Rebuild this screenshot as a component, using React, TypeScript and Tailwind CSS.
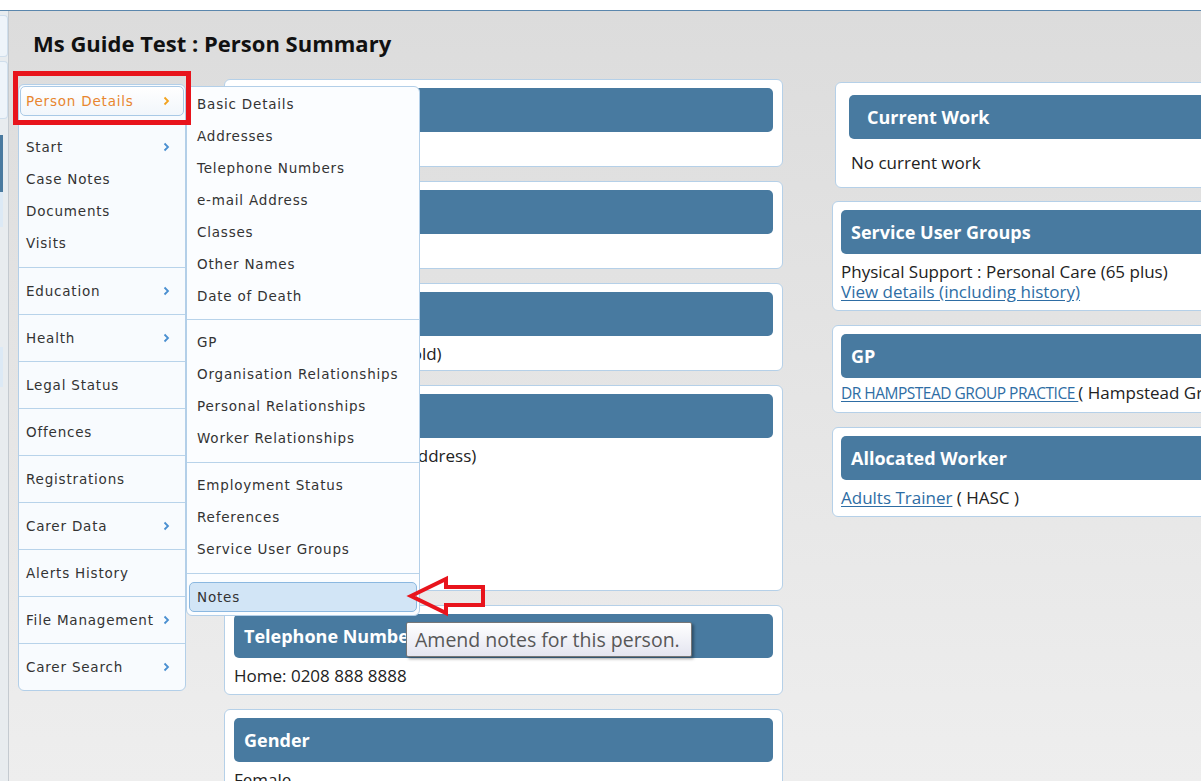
import React from "react";

const menuGroup = ["Start", "Case Notes", "Documents", "Visits"];

const menuItems: { label: string; more?: boolean }[] = [
  { label: "Education", more: true },
  { label: "Health", more: true },
  { label: "Legal Status" },
  { label: "Offences" },
  { label: "Registrations" },
  { label: "Carer Data", more: true },
  { label: "Alerts History" },
  { label: "File Management", more: true },
  { label: "Carer Search", more: true },
];

const subMenu = [
  ["Basic Details", "Addresses", "Telephone Numbers", "e-mail Address", "Classes", "Other Names", "Date of Death"],
  ["GP", "Organisation Relationships", "Personal Relationships", "Worker Relationships"],
  ["Employment Status", "References", "Service User Groups"],
];

const Chevron = ({ color = "#4a8fd0" }: { color?: string }) => (
  <svg width="7" height="10" viewBox="0 0 7 10" className="shrink-0">
    <path d="M1.5 1.5 5 5l-3.5 3.5" fill="none" stroke={color} strokeWidth="1.8" />
  </svg>
);

const Panel = ({
  title,
  children,
  className = "",
  headerClass = "",
  bodyClass = "",
}: {
  title: string;
  children?: React.ReactNode;
  className?: string;
  headerClass?: string;
  bodyClass?: string;
}) => (
  <div className={`border border-[#b5d0e8] rounded-[6px] bg-white ${className}`}>
    <div
      className={`h-[44px] rounded-[5px] bg-[#487aa0] text-white font-bold text-[18px] flex items-center whitespace-nowrap overflow-hidden ${headerClass}`}
    >
      {title}
    </div>
    <div className={`text-[17px] leading-[20px] text-[#222] whitespace-nowrap ${bodyClass}`}>{children}</div>
  </div>
);

const Link = ({ children, className = "" }: { children: React.ReactNode; className?: string }) => (
  <span className={`text-[#2e6da4] underline underline-offset-2 ${className}`}>{children}</span>
);

export default function App() {
  return (
    <div className="relative w-[1201px] h-[781px] overflow-hidden bg-white font-['Open_Sans',sans-serif]">
      <div className="h-[10px] bg-white" />
      <div className="flex h-[771px] border-t border-[#5b87ad]">
        {/* edge of the window behind */}
        <div className="w-[9px] shrink-0 flex flex-col bg-[#e8ecef] border-r border-[#c4cad0]">
          <div className="mt-[4px] h-[42px] rounded-r-[4px] border border-l-0 border-[#cfdeec] bg-[#eef4fa]" />
          <div className="mt-[4px] h-[58px] rounded-r-[4px] border border-l-0 border-[#cfdeec] bg-[#eef4fa]" />
          <div className="mt-[16px] h-[57px] w-[3px] bg-[#4a7a9f]" />
          <div className="h-[35px] w-[3px] bg-[#dce9f5]" />
          <div className="mt-[120px] h-[40px] w-[3px] bg-[#dce9f5]" />
        </div>

        <main className="flex-1 bg-linear-to-b from-[#dcdcdc] to-[#eeeeee]">
          <h1 className="pl-[24px] pt-[18px] text-[22px] leading-[28px] font-bold text-[#111]">
            Ms Guide Test : Person Summary
          </h1>

          <div className="flex items-start mt-[22px]">
            {/* left navigation */}
            <nav className="ml-[9px] mt-[5px] w-[168px] shrink-0 border border-[#b3cfe8] rounded-[6px] bg-[#f8fbfe] font-['DejaVu_Sans',sans-serif] text-[13.5px] tracking-[0.8px] text-[#333]">
              <div className="mx-[1px] mt-[1px] h-[30px] rounded-[5px] border border-[#a9c9e6] bg-linear-to-b from-white to-[#f1f6fb] flex items-center justify-between pl-[5px] pr-[13px] text-[#e8862e]">
                <span>Person Details</span>
                <Chevron color="#f2a31f" />
              </div>
              <div className="pt-[15px] pb-[8px] border-b border-[#b8d3ea]">
                {menuGroup.map((label, i) => (
                  <div key={label} className="h-[32px] flex items-center justify-between pl-[7px] pr-[15px]">
                    <span>{label}</span>
                    {i === 0 && <Chevron />}
                  </div>
                ))}
              </div>
              {menuItems.map((item, i) => (
                <div
                  key={item.label}
                  className={`h-[46px] flex items-center justify-between pl-[7px] pr-[15px] ${
                    i < menuItems.length - 1 ? "border-b border-[#b8d3ea] box-content" : ""
                  }`}
                >
                  <span className="whitespace-nowrap">{item.label}</span>
                  {item.more && <Chevron />}
                </div>
              ))}
            </nav>

            {/* middle column */}
            <div className="ml-[38px] w-[559px] shrink-0 flex flex-col gap-[14px]">
              <Panel title="Name" className="px-[9px] pt-[8px]" headerClass="pl-[10px]" bodyClass="pt-[8px] pb-[6px]">
                Ms Guide Test
              </Panel>
              <Panel title="Date of Birth" className="px-[9px] pt-[8px]" headerClass="pl-[10px]" bodyClass="pt-[8px] pb-[6px]">
                01/01/1940
              </Panel>
              <Panel title="Household" className="px-[9px] pt-[8px]" headerClass="pl-[10px]" bodyClass="pt-[8px] pb-[6px]">
                Single Person (Household)
              </Panel>
              <Panel title="Address" className="px-[9px] pt-[8px]" headerClass="pl-[10px]" bodyClass="pt-[8px] h-[152px]">
                <div>112 Tests Road (Main Address)</div>
                <div>London</div>
                <div>NW3 1AA</div>
              </Panel>
              <Panel title="Telephone Numbers" className="px-[9px] pt-[8px]" headerClass="pl-[10px]" bodyClass="pt-[8px] pb-[8px]">
                Home: 0208 888 8888
              </Panel>
              <Panel title="Gender" className="px-[9px] pt-[8px]" headerClass="pl-[10px]" bodyClass="pt-[8px] pb-[6px]">
                Female
              </Panel>
            </div>

            {/* right column */}
            <div className="ml-[49px] mt-[3px] w-[420px] shrink-0 flex flex-col">
              <Panel
                title="Current Work"
                className="ml-[3px] px-[13px] pt-[12px]"
                headerClass="pl-[18px]"
                bodyClass="pt-[14px] pb-[14px] pl-[2px]"
              >
                No current work
              </Panel>
              <Panel title="Service User Groups" className="mt-[13px] px-[8px] pt-[8px]" headerClass="pl-[10px]" bodyClass="pt-[8px] pb-[8px]">
                <div>Physical Support : Personal Care (65 plus)</div>
                <div>
                  <Link>View details (including history)</Link>
                </div>
              </Panel>
              <Panel title="GP" className="mt-[14px] px-[8px] pt-[8px]" headerClass="pl-[10px]" bodyClass="pt-[5px] pb-[9px]">
                <Link className="text-[15.5px] tracking-[-0.5px]">DR HAMPSTEAD GROUP PRACTICE </Link>( Hampstead Group Practice )
              </Panel>
              <Panel title="Allocated Worker" className="mt-[14px] px-[8px] pt-[8px]" headerClass="pl-[10px]" bodyClass="pt-[8px] pb-[8px]">
                <Link>Adults Trainer</Link> ( HASC )
              </Panel>
            </div>
          </div>
        </main>
      </div>

      {/* Person Details fly-out */}
      <div className="absolute left-[186px] top-[86px] w-[234px] border border-[#b3cfe8] rounded-tr-[6px] rounded-b-[6px] bg-[#fbfdff] font-['DejaVu_Sans',sans-serif] text-[13.5px] tracking-[0.8px] text-[#333]">
        {subMenu.map((group, gi) => (
          <div
            key={gi}
            className={`border-b border-[#b8d3ea] ${gi === 0 ? "pt-[1px] pb-[7px]" : "pt-[6px] pb-[8px]"}`}
          >
            {group.map((label) => (
              <div key={label} className="h-[32px] flex items-center pl-[10px] whitespace-nowrap">
                {label}
              </div>
            ))}
          </div>
        ))}
        <div className="pt-[8px] pb-[3px] px-[2px]">
          <div className="h-[30px] rounded-[5px] border border-[#8bb8e0] bg-[#d2e5f6] flex items-center pl-[7px]">
            Notes
          </div>
        </div>
      </div>

      {/* callout box and arrow */}
      <div className="absolute left-[13px] top-[71px] w-[178px] h-[54px] border-[5px] border-[#e8141c]" />
      <svg className="absolute left-[404px] top-[572px]" width="84" height="48" viewBox="0 0 84 48">
        <path d="M7 24 42 7v8h37v18H42v8z" fill="none" stroke="#e8141c" strokeWidth="4" strokeLinejoin="miter" />
      </svg>

      {/* tooltip */}
      <div className="absolute left-[406px] top-[622px] w-[286px] h-[35px] border border-[#767676] rounded-[2px] bg-linear-to-b from-white to-[#e4e5f0] shadow-[2px_2px_3px_rgba(0,0,0,0.35)] flex items-center pl-[8px] text-[19.5px] text-[#575757] whitespace-nowrap">
        Amend notes for this person.
      </div>
    </div>
  );
}
